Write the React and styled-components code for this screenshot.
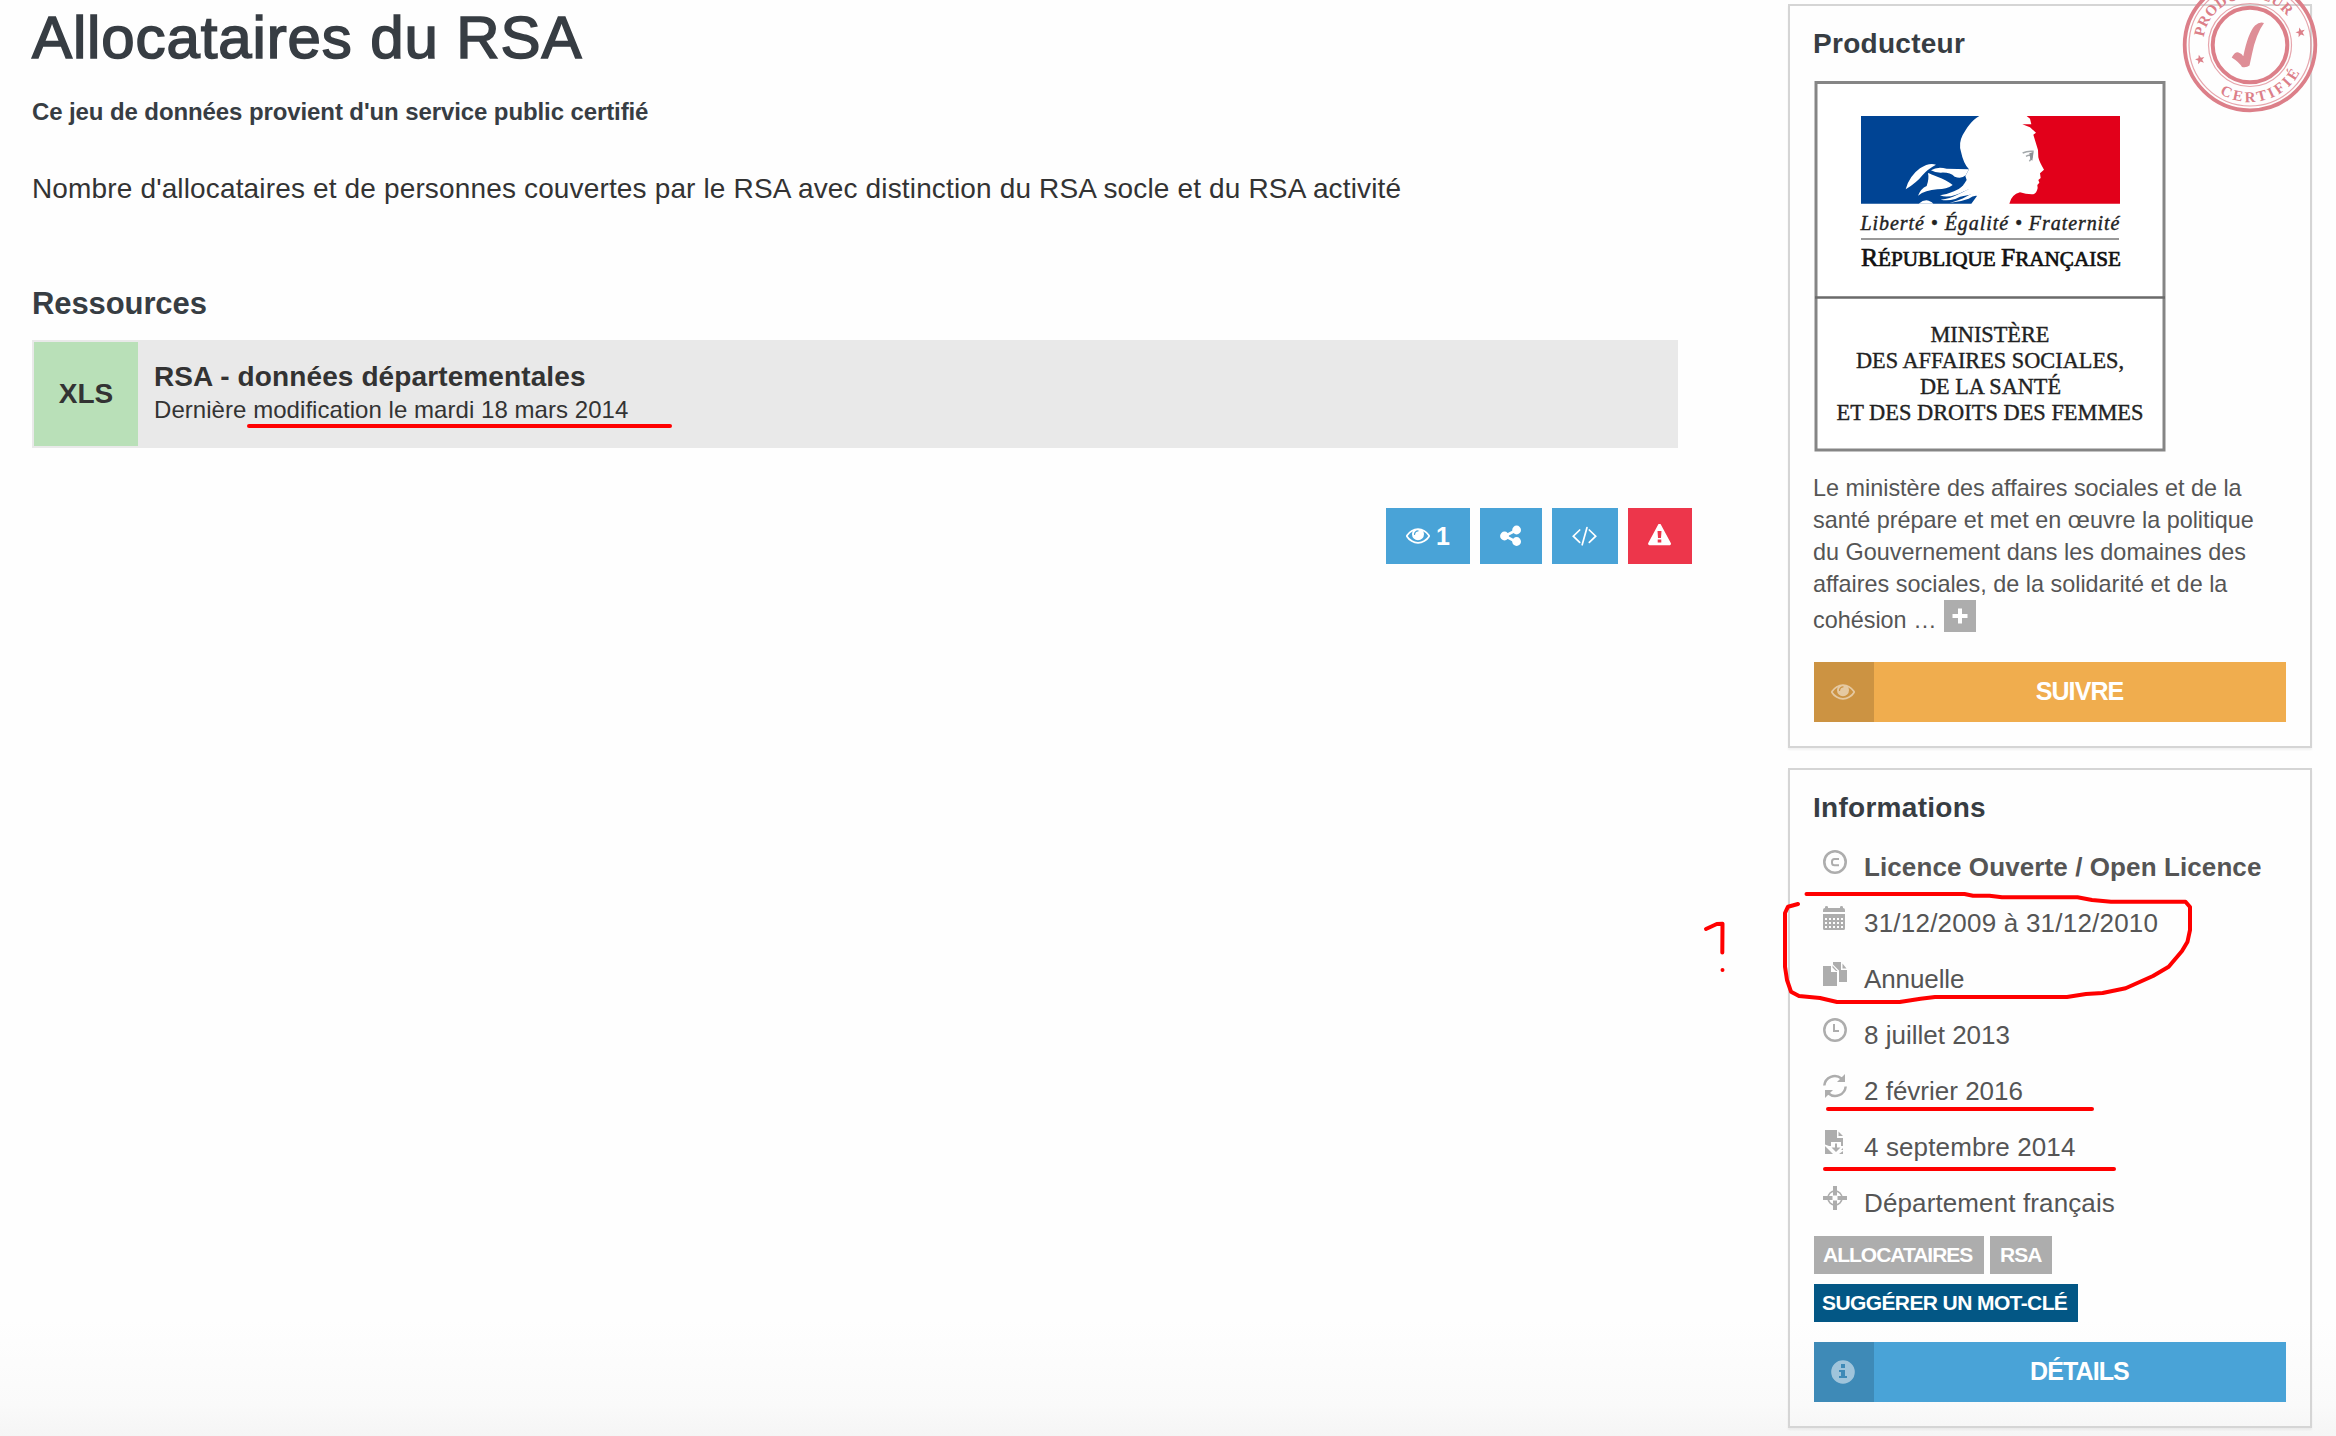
import React from 'react';
import styled, { createGlobalStyle } from 'styled-components';

const GlobalStyle = createGlobalStyle`
  * { box-sizing: border-box; }
  html, body { margin: 0; padding: 0; }
  body {
    font-family: "Liberation Sans", Arial, Helvetica, sans-serif;
    color: #333;
    background: #fefefe;
    overflow: hidden;
  }
  svg { display: block; }
`;

const Page = styled.div`
  position: relative;
  display: flex;
  align-items: flex-start;
  gap: 96px;
  width: 2336px;
  height: 1436px;
  padding: 4px 24px 0 32px;
  overflow: hidden;
  background: linear-gradient(to bottom, #fefefe 0, #fefefe 1320px, #fafafa 1405px, #f5f5f5 1436px);
`;

/* ---------- main column ---------- */

const Main = styled.main`
  display: flex;
  flex-direction: column;
  width: 1660px;
`;

const Title = styled.h1`
  margin: 0;
  padding-top: 1px;
  font-size: 60px;
  line-height: 66px;
  font-weight: 400;
  letter-spacing: 0.88px;
  color: #373d43;
  -webkit-text-stroke: 1.6px #373d43;
`;

const Certified = styled.p`
  margin: 27px 0 0;
  font-size: 24px;
  line-height: 28px;
  font-weight: 700;
  letter-spacing: -0.1px;
  color: #373d43;
`;

const Lead = styled.p`
  margin: 43px 0 0;
  font-size: 28px;
  line-height: 40px;
  letter-spacing: 0.15px;
  white-space: nowrap;
`;

const SectionTitle = styled.h3`
  margin: 77px 0 0;
  font-size: 31px;
  line-height: 36px;
  font-weight: 700;
  letter-spacing: -0.1px;
  color: #373d43;
`;

const Resource = styled.a`
  display: flex;
  width: 1646px;
  height: 108px;
  margin-top: 18px;
  padding: 2px;
  background: #e9e9e9;
`;

const Format = styled.div`
  display: flex;
  align-items: center;
  justify-content: center;
  width: 104px;
  background: #b9e0b8;
  font-size: 28px;
  font-weight: 700;
`;

const ResourceBody = styled.div`
  display: flex;
  flex-direction: column;
  gap: 3px;
  padding: 19px 0 0 16px;
`;

const ResourceName = styled.div`
  font-size: 28px;
  line-height: 32px;
  font-weight: 700;
  letter-spacing: 0.11px;
`;

const ResourceDate = styled.div`
  font-size: 24px;
  line-height: 28px;
  letter-spacing: 0.05px;
`;

const Toolbar = styled.div`
  display: flex;
  justify-content: flex-end;
  gap: 10px;
  margin-top: 60px;
`;

const ToolButton = styled.button`
  display: flex;
  align-items: center;
  justify-content: center;
  gap: 6px;
  width: ${(p) => p.$width}px;
  height: 56px;
  padding: 0;
  border: 0;
  color: #fff;
  background: ${(p) => (p.$danger ? '#ed364b' : '#49a3d7')};
  font: 700 25px/56px "Liberation Sans", Arial, sans-serif;
`;

/* ---------- sidebar ---------- */

const Sidebar = styled.aside`
  display: flex;
  flex-direction: column;
  gap: 20px;
  width: 524px;
`;

const Panel = styled.section`
  position: relative;
  display: flex;
  flex-direction: column;
  padding: 22px 24px 24px;
  border: 2px solid #d5d5d5;
  box-shadow: 0 2px 2px rgba(0, 0, 0, 0.05);
`;

const PanelTitle = styled.h3`
  margin: 0 0 0 -1px;
  font-size: 28px;
  line-height: 32px;
  font-weight: 700;
  letter-spacing: 0.28px;
  color: #373d43;
`;

const Stamp = styled.svg`
  position: absolute;
  left: 390px;
  top: -31px;
`;

const Logo = styled.svg`
  margin-top: 21px;
`;

const Description = styled.div`
  margin: 20px 0 0 -1px;
  font-size: 23.4px;
  line-height: 32px;
  color: #555;
  white-space: nowrap;
`;

const LastLine = styled.div`
  display: flex;
  gap: 7px;
  line-height: 40px;
`;

const More = styled.span`
  display: flex;
  align-items: center;
  justify-content: center;
  width: 32px;
  height: 32px;
  background: #adadad;
`;

const WideButton = styled.button`
  display: flex;
  width: 472px;
  height: 60px;
  margin-top: ${(p) => p.$gap}px;
  padding: 0;
  border: 0;
  color: #fff;
  background: ${(p) => p.$color};
  font: 700 25px/60px "Liberation Sans", Arial, sans-serif;
  letter-spacing: -0.9px;
`;

const ButtonIcon = styled.span`
  display: flex;
  align-items: center;
  justify-content: center;
  width: 60px;
  height: 60px;
  padding-right: 2px;
  background: rgba(0, 0, 0, 0.15);

  svg { opacity: 0.5; }
`;

const ButtonLabel = styled.span`
  flex: 1;
  padding-right: 1px;
  line-height: 58px;
  text-align: center;
`;

const InfoList = styled.ul`
  display: flex;
  flex-direction: column;
  margin: 15px 0 0;
  padding: 0;
  list-style: none;
`;

const InfoRow = styled.li`
  display: flex;
  gap: 17px;
  height: 56px;
  padding-left: 9px;
  font-size: 26px;
  line-height: 56px;
  font-weight: ${(p) => (p.$bold ? 700 : 400)};
  letter-spacing: ${(p) => p.$track ?? 0.12}px;
  color: #555;

  svg { margin-top: 11px; }
`;

const Tags = styled.div`
  display: flex;
  flex-wrap: wrap;
  gap: 10px 6px;
  margin-top: 5px;
`;

const Tag = styled.span`
  height: 38px;
  width: ${(p) => p.$width}px;
  padding-left: ${(p) => p.$pad}px;
  font-size: 21px;
  line-height: 38px;
  font-weight: 700;
  white-space: nowrap;
  letter-spacing: ${(p) => p.$track}px;
  color: #fff;
  background: ${(p) => (p.$action ? '#035785' : '#adadad')};
`;

const Markup = styled.svg`
  position: absolute;
  left: 0;
  top: 0;
  pointer-events: none;
`;

/* ---------- icons ---------- */

const EyeIcon = ({ size = 24 }) => (
  <svg width={size} height={size} viewBox="0 64 1792 1792" fill="currentColor">
    <path d="M1664 960q-152-236-381-353 61 104 61 225 0 185-131.5 316.5t-316.5 131.5-316.5-131.5-131.5-316.5q0-121 61-225-229 117-381 353 133 205 333.5 326.5t434.5 121.5 434.5-121.5 333.5-326.5zm-720-384q0-20-14-34t-34-14q-125 0-214.5 89.5t-89.5 214.5q0 20 14 34t34 14 34-14 14-34q0-86 61-147t147-61q20 0 34-14t14-34zm848 384q0 34-20 69-140 230-376.5 368.5t-499.5 138.5-499.5-139-376.5-368q-20-35-20-69t20-69q140-229 376.5-368t499.5-139 499.5 139 376.5 368q20 35 20 69z" />
  </svg>
);

const ShareIcon = () => (
  <svg width="22" height="22" viewBox="0 0 22 22" fill="currentColor">
    <path d="M16.5 5L5 11l11.500 6" fill="none" stroke="currentColor" strokeWidth="2.600" />
    <circle cx="4.500" cy="11" r="4.400" />
    <circle cx="16.600" cy="5" r="4.400" />
    <circle cx="16.600" cy="16.500" r="4.400" />
  </svg>
);

const CodeIcon = () => (
  <svg width="26" height="20" viewBox="0.500 0 26 20" fill="none" stroke="currentColor" strokeWidth="1.700" strokeLinecap="round">
    <path d="M8.200 4L1.800 10.200L8.200 16.300M17.800 4l6.400 6.200L17.800 16.300M15.500 1.500L10.700 18.800" />
  </svg>
);

const WarningIcon = () => (
  <svg width="24" height="24" viewBox="0.500 1 24 24">
    <path d="M12 2L22.500 20.800H1.500z" fill="#fff" stroke="#fff" strokeWidth="2.800" strokeLinejoin="round" transform="translate(0.500 0) scale(0.960 1)" />
    <path d="M10 8h4l-.5 7h-3zM10.200 16.400h3.600v3h-3.600z" fill="#ed364b" />
  </svg>
);

const InfoIcon = () => (
  <svg width="24" height="24" viewBox="0 0 24 24">
    <path fill="#fff" fillRule="evenodd" d="M12 .2a11.800 11.800 0 1 1 0 23.600a11.800 11.800 0 0 1 0-23.600zM10 4v4h4V4zM8 10v2h2v4H8v2h8v-2h-2v-6z" />
  </svg>
);

const grid = [];
for (let y = 12; y <= 20; y += 4) for (let x = 2; x <= 18; x += 4) grid.push([x, y]);

const glyphs = {
  copyright: (
    <g fill="none" stroke="#adadad" strokeWidth="2.600">
      <circle cx="12" cy="12" r="10.700" />
      <path d="M16 8.900H11.500q-2.500 0-2.500 2.500v1.400q0 2.500 2.500 2.500H16" strokeWidth="2" />
    </g>
  ),
  calendar: (
    <g fill="#adadad">
      <path d="M2 2V1q0-1 1.500-1T5 1v1h12V1q0-1 1.500-1T20 1v1q2 0 2 2v2H0V4q0-2 2-2zM0 8h22v14.500q0 1.500-1.500 1.500h-19Q0 24 0 22.500z" />
      {grid.map(([x, y]) => (
        <rect key={`${x}-${y}`} x={x} y={y} width="2" height="2" fill="#fefefe" />
      ))}
    </g>
  ),
  copy: (
    <path fill="#adadad" d="M0 4h8v6h6v14H0zM9.500 3.500L14.500 9H13L9.500 5.500zM10 0h8v8h6v12h-8V8.500L10 2.500zM19.500 1.500l4 5h-4z" />
  ),
  clock: (
    <g fill="none" stroke="#adadad" strokeWidth="2.500">
      <circle cx="12" cy="12" r="10.700" />
      <path d="M11 6v7h5" strokeWidth="2" />
    </g>
  ),
  refresh: (
    <g>
      <path d="M1.300 11.500A10.500 10.500 0 0 1 18.500 4.500M22.700 12.500A10.500 10.500 0 0 1 5.500 19.500" fill="none" stroke="#adadad" strokeWidth="2.500" />
      <path d="M22 0v8h-8zM2 24v-8h8z" fill="#adadad" />
    </g>
  ),
  download: (
    <path fill="#adadad" d="M2 0h12v8h6v8h-2v-4H8v4H6l-4-1.500zM15.500 1.500L20 6h-4.500zM2 16l8 8H2zM12 13.500h2v4h3.500L13 22l-4.500-4.500H12zM20 18v2h-2zM20 21v3h-4z" />
  ),
  crosshair: (
    <g>
      <circle cx="12" cy="12" r="7" fill="none" stroke="#adadad" strokeWidth="1.600" />
      <path fill="#adadad" d="M10 0h4v9.500h-4zM10 14.500h4V24h-4zM0 10h9.500v4H0zM14.500 10H24v4h-9.500z" />
    </g>
  ),
};

const Glyph = ({ name }) => (
  <svg width="24" height="24" viewBox="0 0 24 24">{glyphs[name]}</svg>
);

/* ---------- illustrations ---------- */

const serif = '"Liberation Serif", "Times New Roman", serif';
const star = 'M0-5L1.300-1.600L4.800-1.500L2 .700L3 4.200L0 2.100L-3 4.200L-2 .700L-4.800-1.500L-1.300-1.600z';

const CertifiedStamp = () => (
  <Stamp width="140" height="140" viewBox="-70 -70 140 140">
    <g fill="none" stroke="#dc7f89">
      <circle r="65.300" strokeWidth="3.800" />
      <circle r="61" strokeWidth="1.200" opacity="0.700" />
      <circle r="37.300" strokeWidth="4" />
      <circle r="41.500" strokeWidth="1.200" opacity="0.700" />
    </g>
    <path fill="#de8e97" d="M-18.300 12.500Q-15 6.500-11.500 7.500Q-8 8.500-6.700 11.300Q-2-12 5-19.500Q10-24 14-22Q6-11 2 9L-.5 20.500Q-3.500 23-8 22Q-11 17-18.300 12.500z" />
    <g transform="rotate(-14)" fill="#dc7f89" fontFamily={serif} fontSize="15" fontWeight="700" textAnchor="middle">
      <path id="arc-top" d="M-47 0A47 47 0 0 1 47 0" fill="none" />
      <path id="arc-bottom" d="M-57 0A57 57 0 0 0 57 0" fill="none" />
      <text letterSpacing="0.300"><textPath href="#arc-top" startOffset="50%">PRODUCTEUR</textPath></text>
      <text letterSpacing="2.900"><textPath href="#arc-bottom" startOffset="51%">CERTIFIÉ</textPath></text>
      <path d={star} transform="translate(-52 2)" />
      <path d={star} transform="translate(52 0)" />
    </g>
  </Stamp>
);

const MinistryLogo = () => (
  <Logo width="352" height="371" viewBox="0 0 352 371">
    <rect x="2" y="1.500" width="348" height="367.500" fill="#fff" stroke="#858585" strokeWidth="3" />
    <path d="M1 216.500H351" stroke="#6a6a6a" strokeWidth="2.600" />
    <g transform="translate(36 19) scale(0.33333)">
      <path fill="#004494" d="M33 48H388C365 60 350 85 338 105Q325 130 333 155Q340 190 357 208L346 228L350 240L336 262L357 268L330 290L388 278L364 311H33z" />
      <g fill="#fff">
        <path d="M167 268Q178 228 210 205Q238 186 258 194Q232 208 218 225Q200 248 167 268z" />
        <path d="M243 211Q262 198 290 206Q320 206 357 208L347 226Q334 238 314 230Q300 216 272 218Q254 218 243 211z" />
        <path d="M234 219Q242 222 262 230Q290 240 308 255Q290 268 262 268Q226 270 204 287Q212 266 230 258Q238 236 234 219z" />
        <path d="M352 236Q342 262 312 274Q290 284 270 286Q290 294 318 284Q344 274 358 266L340 258z" />
        <path d="M272 299Q300 296 322 284Q340 276 362 264L350 276Q336 290 316 297Q292 304 272 299z" />
        <path d="M298 309Q330 300 348 290Q366 278 390 276L384 288Q372 284 356 296Q330 306 298 309z" />
        <path d="M206 311Q222 298 236 302Q248 306 250 311z" />
      </g>
      <path fill="#e2001a" d="M530 48H810V311H478Q484 284 510 277Q530 284 550 283Q560 280 563 264L562 255L568 248L565 240L572 234L570 220L582 209Q568 186 565 172L564 150Q558 130 550 104L558 98L540 82L517 73L544 73L540 56z" />
      <path fill="none" stroke="#a3a8ab" strokeWidth="4.500" d="M518 159Q532 152 551 154M528 169Q540 162 546 170Q542 180 538 184" />
      <path fill="#8d9296" d="M538 160L551 155L547 182L541 178z" />
    </g>
    <g fontFamily={serif} fill="#222">
      <text x="46.500" y="149" fontSize="20" fontStyle="italic" textLength="259" stroke="#222" strokeWidth="0.400">Liberté • Égalité • Fraternité</text>
      <path d="M47 158H305" stroke="#777" strokeWidth="1.500" />
      <text x="47" y="185" fontSize="21.500" textLength="260" lengthAdjust="spacingAndGlyphs" stroke="#111" strokeWidth="0.700" fill="#111">
        <tspan fontSize="26">R</tspan>ÉPUBLIQUE <tspan fontSize="26">F</tspan>RANÇAISE
      </text>
      <g fontSize="23.500" stroke="#222" strokeWidth="0.400">
        <text x="116.500" y="261" textLength="119" lengthAdjust="spacingAndGlyphs">MINISTÈRE</text>
        <text x="42" y="287" textLength="268" lengthAdjust="spacingAndGlyphs">DES AFFAIRES SOCIALES,</text>
        <text x="106" y="313" textLength="141" lengthAdjust="spacingAndGlyphs">DE LA SANTÉ</text>
        <text x="22.500" y="339" textLength="307" lengthAdjust="spacingAndGlyphs">ET DES DROITS DES FEMMES</text>
      </g>
    </g>
  </Logo>
);

const Annotations = () => (
  <Markup width="2336" height="1436" viewBox="0 0 2336 1436" fill="none" stroke="#f00" strokeWidth="4" strokeLinecap="round" strokeLinejoin="round">
    <path d="M249 426H670" />
    <path d="M1828 1109H2092" />
    <path d="M1825 1169H2114" />
    <path d="M1806.500 894H1964.500L1973 895.700H1989.500L2002 897.300H2077.500L2092 900L2111 901.700H2185.500L2190 907V930L2187.500 941.700L2182 951L2168.700 966.700L2153 976L2125.600 988.300L2102.600 993L2086 994L2067 997H1935L1920.600 998.700L1899.700 1002H1837L1820 998L1799 996L1791 991.700L1787 980L1785 966.700V913L1788 906.700L1798 904" />
    <path d="M1706 929L1716.800 924L1722.500 923.700L1722.300 952.500M1722.500 970v.1" />
  </Markup>
);

const infos = [
  ['copyright', 'Licence Ouverte / Open Licence', true, 0.1],
  ['calendar', '31/12/2009 à 31/12/2010', false, 0.22],
  ['copy', 'Annuelle', false, -0.1],
  ['clock', '8 juillet 2013', false, 0],
  ['refresh', '2 février 2016', false, 0],
  ['download', '4 septembre 2014'],
  ['crosshair', 'Département français'],
];

export default function App() {
  return (
    <Page>
      <GlobalStyle />
      <Main>
        <Title>Allocataires du RSA</Title>
        <Certified>Ce jeu de données provient d'un service public certifié</Certified>
        <Lead>
          Nombre d'allocataires et de personnes couvertes par le RSA avec distinction du RSA socle et du RSA activité
        </Lead>
        <SectionTitle>Ressources</SectionTitle>
        <Resource>
          <Format>XLS</Format>
          <ResourceBody>
            <ResourceName>RSA - données départementales</ResourceName>
            <ResourceDate>Dernière modification le mardi 18 mars 2014</ResourceDate>
          </ResourceBody>
        </Resource>
        <Toolbar>
          <ToolButton $width={84}><EyeIcon />1</ToolButton>
          <ToolButton $width={62}><ShareIcon /></ToolButton>
          <ToolButton $width={66}><CodeIcon /></ToolButton>
          <ToolButton $width={64} $danger><WarningIcon /></ToolButton>
        </Toolbar>
      </Main>
      <Sidebar>
        <Panel>
          <PanelTitle>Producteur</PanelTitle>
          <CertifiedStamp />
          <MinistryLogo />
          <Description>
            <div>Le ministère des affaires sociales et de la</div>
            <div>santé prépare et met en œuvre la politique</div>
            <div>du Gouvernement dans les domaines des</div>
            <div>affaires sociales, de la solidarité et de la</div>
            <LastLine>
              cohésion …
              <More>
                <svg width="16" height="16" viewBox="0 0 16 16">
                  <path d="M8 0.500v15M0.500 8h15" stroke="#fff" strokeWidth="4" />
                </svg>
              </More>
            </LastLine>
          </Description>
          <WideButton $color="#f0ad4e" $gap={22}>
            <ButtonIcon><EyeIcon /></ButtonIcon>
            <ButtonLabel>SUIVRE</ButtonLabel>
          </WideButton>
        </Panel>
        <Panel>
          <PanelTitle>Informations</PanelTitle>
          <InfoList>
            {infos.map(([icon, label, bold, track]) => (
              <InfoRow key={icon} $bold={bold} $track={track}>
                <Glyph name={icon} />
                {label}
              </InfoRow>
            ))}
          </InfoList>
          <Tags>
            <Tag $width={170} $pad={9} $track={-1}>ALLOCATAIRES</Tag>
            <Tag $width={62} $pad={10} $track={-1}>RSA</Tag>
            <Tag $width={264} $pad={8} $track={-0.6} $action>SUGGÉRER UN MOT-CLÉ</Tag>
          </Tags>
          <WideButton $color="#49a3d7" $gap={20}>
            <ButtonIcon><InfoIcon /></ButtonIcon>
            <ButtonLabel>DÉTAILS</ButtonLabel>
          </WideButton>
        </Panel>
      </Sidebar>
      <Annotations />
    </Page>
  );
}
